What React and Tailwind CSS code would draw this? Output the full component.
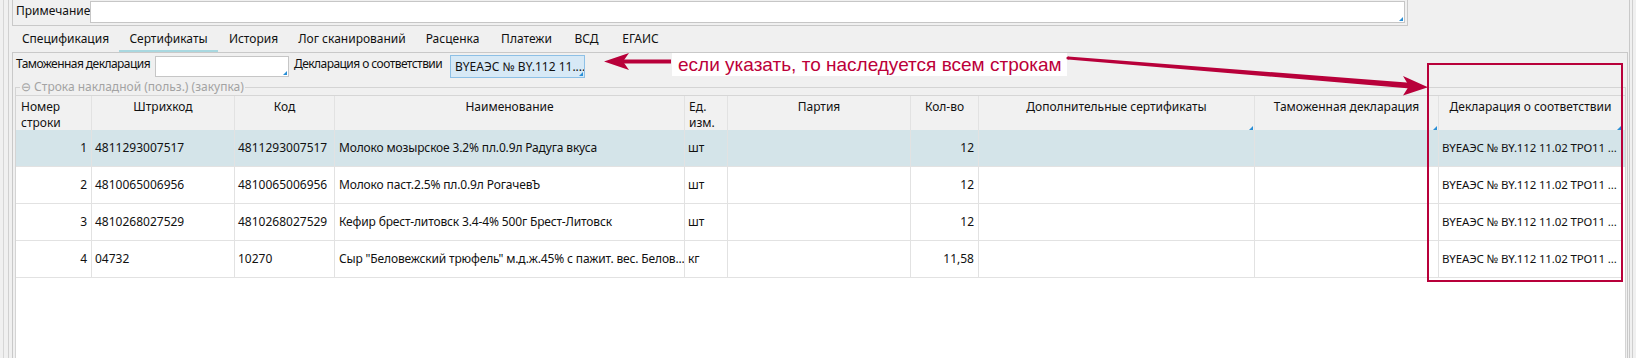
import React from "react";

const FONT = { fontFamily: '"Segoe UI", "Noto Sans", "Liberation Sans", sans-serif' };

const rows = [
  ["1", "4811293007517", "4811293007517", "Молоко мозырское 3.2% пл.0.9л Радуга вкуса", "шт", "", "12", "", "", "BYEAЭС № BY.112 11.02 ТРО11 ..."],
  ["2", "4810065006956", "4810065006956", "Молоко паст.2.5% пл.0.9л РогачевЪ", "шт", "", "12", "", "", "BYEAЭС № BY.112 11.02 ТРО11 ..."],
  ["3", "4810268027529", "4810268027529", "Кефир брест-литовск 3.4-4% 500г Брест-Литовск", "шт", "", "12", "", "", "BYEAЭС № BY.112 11.02 ТРО11 ..."],
  ["4", "04732", "10270", "Сыр \"Беловежский трюфель\" м.д.ж.45% с пажит. вес. Белов...", "кг", "", "11,58", "", "", "BYEAЭС № BY.112 11.02 ТРО11 ..."],
];

const tabs = [
  ["Спецификация", "w-[107px]"],
  ["Сертификаты", "w-[99px]"],
  ["История", "w-[71px]"],
  ["Лог сканирований", "w-[126px]"],
  ["Расценка", "w-[75px]"],
  ["Платежи", "w-[73px]"],
  ["ВСД", "w-[47px]"],
  ["ЕГАИС", "w-[61px]"],
];

function Corner() {
  return (
    <span className="absolute right-[1px] bottom-[1px] w-0 h-0 border-l-[4px] border-l-transparent border-b-[4px] border-b-[#2b8fd6]" />
  );
}

const GRID = "grid grid-cols-[76px_143px_100px_350px_43px_183px_68px_276px_184px_184px]";

function cellClass(ci) {
  let c = "border-r border-b border-[#e2e2e2] flex items-center whitespace-nowrap overflow-hidden ";
  if (ci === 0 || ci === 6) c += "justify-end pr-[4px]";
  else if (ci === 3) c += "pl-[4px] tracking-[-0.15px]";
  else if (ci === 9) c += "pl-[3px] text-[11.5px] tracking-[-0.15px]";
  else c += "pl-[3px]";
  return c;
}

export default function App() {
  return (
    <div className="relative w-[1636px] h-[358px] overflow-hidden bg-[#f0f0f0] text-[12px] text-[#111] flex" style={FONT}>
      {/* left gutter */}
      <div className="flex h-full shrink-0">
        <div className="w-[3px]" />
        <div className="w-px bg-[#d6d6d6]" />
        <div className="w-[4px]" />
        <div className="w-px bg-[#d0d0d0]" />
        <div className="w-[3px]" />
      </div>

      {/* main */}
      <div className="flex-1 flex flex-col min-w-0">
        {/* note row */}
        <div className="h-[26px] flex shrink-0">
          <div className="w-[1396px] h-[26px] border-l border-r border-b border-[#c9c9c9] flex items-start pl-[3px]">
            <span className="leading-[20px] mt-[1px] w-[74px] whitespace-nowrap">Примечание</span>
            <div className="relative mt-[1px] w-[1315px] h-[22px] bg-white border border-[#c6c6c6]">
              <Corner />
            </div>
          </div>
        </div>

        {/* tabs */}
        <div className="h-[26px] flex items-end shrink-0">
          {tabs.map(([t, w], i) => (
            <div
              key={t}
              className={
                "h-[26px] flex items-center justify-center whitespace-nowrap " +
                w +
                (i === 1 ? " border-b-[2px] border-[#a9d8e0]" : " border-b-[2px] border-transparent")
              }
            >
              <span className="leading-[16px] pt-[1px]">{t}</span>
            </div>
          ))}
        </div>

        {/* tab page */}
        <div className="flex-1 flex flex-col border-t border-l border-r border-[#c9c9c9] mr-[1px] min-h-0">
          {/* fields row */}
          <div className="flex items-start pt-[2px] pl-[3px] h-[24px] shrink-0">
            <span className="leading-[18px] w-[139px] whitespace-nowrap tracking-[-0.55px]">Таможенная декларация</span>
            <div className="relative mt-[1px] w-[134px] h-[21px] bg-white border border-[#c6c6c6]">
              <Corner />
            </div>
            <span className="leading-[18px] ml-[5px] w-[156px] whitespace-nowrap tracking-[-0.55px]">Декларация о соответствии</span>
            <div className="relative w-[135px] h-[23px] bg-[#d7e9f6] border border-[#8dc0e6] px-[4px] leading-[21px] whitespace-nowrap overflow-hidden">
              BYEAЭС № BY.112 11....
              <Corner />
            </div>
          </div>

          {/* group box */}
          <fieldset className="mt-[3px] ml-[2px] mr-[1px] flex-1 border-t border-l border-r border-[#d4d4d4] min-h-0 flex flex-col">
            <legend className="ml-[4px] px-[1px] leading-[14px] text-[#a3a3a3] whitespace-nowrap">⊖ Строка накладной (польз.) (закупка)</legend>
            <div className="flex-1 bg-white border-t border-[#d6d6d6] mt-[1px]">
              {/* header */}
              <div className={GRID + " h-[34px] bg-[#f1f1f1]"}>
                <div className="border-r border-[#e2e2e2] pl-[5px] pt-[3px] leading-[16px]">Номер<br />строки</div>
                <div className="border-r border-[#e2e2e2] text-center pt-[3px] leading-[16px]">Штрихкод</div>
                <div className="border-r border-[#e2e2e2] text-center pt-[3px] leading-[16px]">Код</div>
                <div className="border-r border-[#e2e2e2] text-center pt-[3px] leading-[16px]">Наименование</div>
                <div className="border-r border-[#e2e2e2] pl-[4px] pt-[3px] leading-[16px]">Ед.<br />изм.</div>
                <div className="border-r border-[#e2e2e2] text-center pt-[3px] leading-[16px]">Партия</div>
                <div className="border-r border-[#e2e2e2] text-center pt-[3px] leading-[16px]">Кол-во</div>
                <div className="relative border-r border-[#e2e2e2] text-center pt-[3px] leading-[16px] whitespace-nowrap">Дополнительные сертификаты<Corner /></div>
                <div className="relative border-r border-[#e2e2e2] text-center pt-[3px] leading-[16px] whitespace-nowrap">Таможенная декларация<Corner /></div>
                <div className="relative border-r border-[#e2e2e2] text-center pt-[3px] leading-[16px] whitespace-nowrap">Декларация о соответствии<Corner /></div>
              </div>
              {/* rows */}
              {rows.map((r, ri) => (
                <div key={ri} className={GRID + " h-[37px] " + (ri === 0 ? "bg-[#d4e4e9]" : "bg-white")}>
                  {r.map((c, ci) => (
                    <div key={ci} className={cellClass(ci)}>
                      {c}
                    </div>
                  ))}
                </div>
              ))}
            </div>
          </fieldset>
        </div>
      </div>

      {/* right gutter */}
      <div className="flex h-full shrink-0">
        <div className="w-px bg-[#c9c9c9]" />
        <div className="w-[2px]" />
        <div className="w-px bg-[#cfcfcf]" />
        <div className="w-[3px]" />
      </div>

      {/* annotations */}
      <div className="absolute left-[672px] top-[53px] h-[23px] w-[395px] bg-white pl-[6px] text-[19px] leading-[23px] text-[#bc0039] whitespace-nowrap" style={{ fontFamily: '"Liberation Sans", Arial, sans-serif' }}>
        если указать, то наследуется всем строкам
      </div>
      <div className="absolute left-[1427px] top-[63px] w-[196px] h-[219px] border-2 border-[#b8003a]" />
      <svg className="absolute left-0 top-0 pointer-events-none" width="1636" height="358" viewBox="0 0 1636 358">
        <path d="M604 61.5 L629 53 L623 61.5 L629 70 Z" fill="#b8003a" />
        <rect x="620" y="59.5" width="51" height="4" fill="#b8003a" />
        <path d="M1068 56.4 L1410 82.8 L1410 88.4 L1068 59.6 Z" fill="#b8003a" />
        <circle cx="1068" cy="58" r="1.6" fill="#b8003a" />
        <path d="M1428 87.2 L1403 76 L1409 86 L1403 95.5 Z" fill="#b8003a" />
      </svg>
    </div>
  );
}
